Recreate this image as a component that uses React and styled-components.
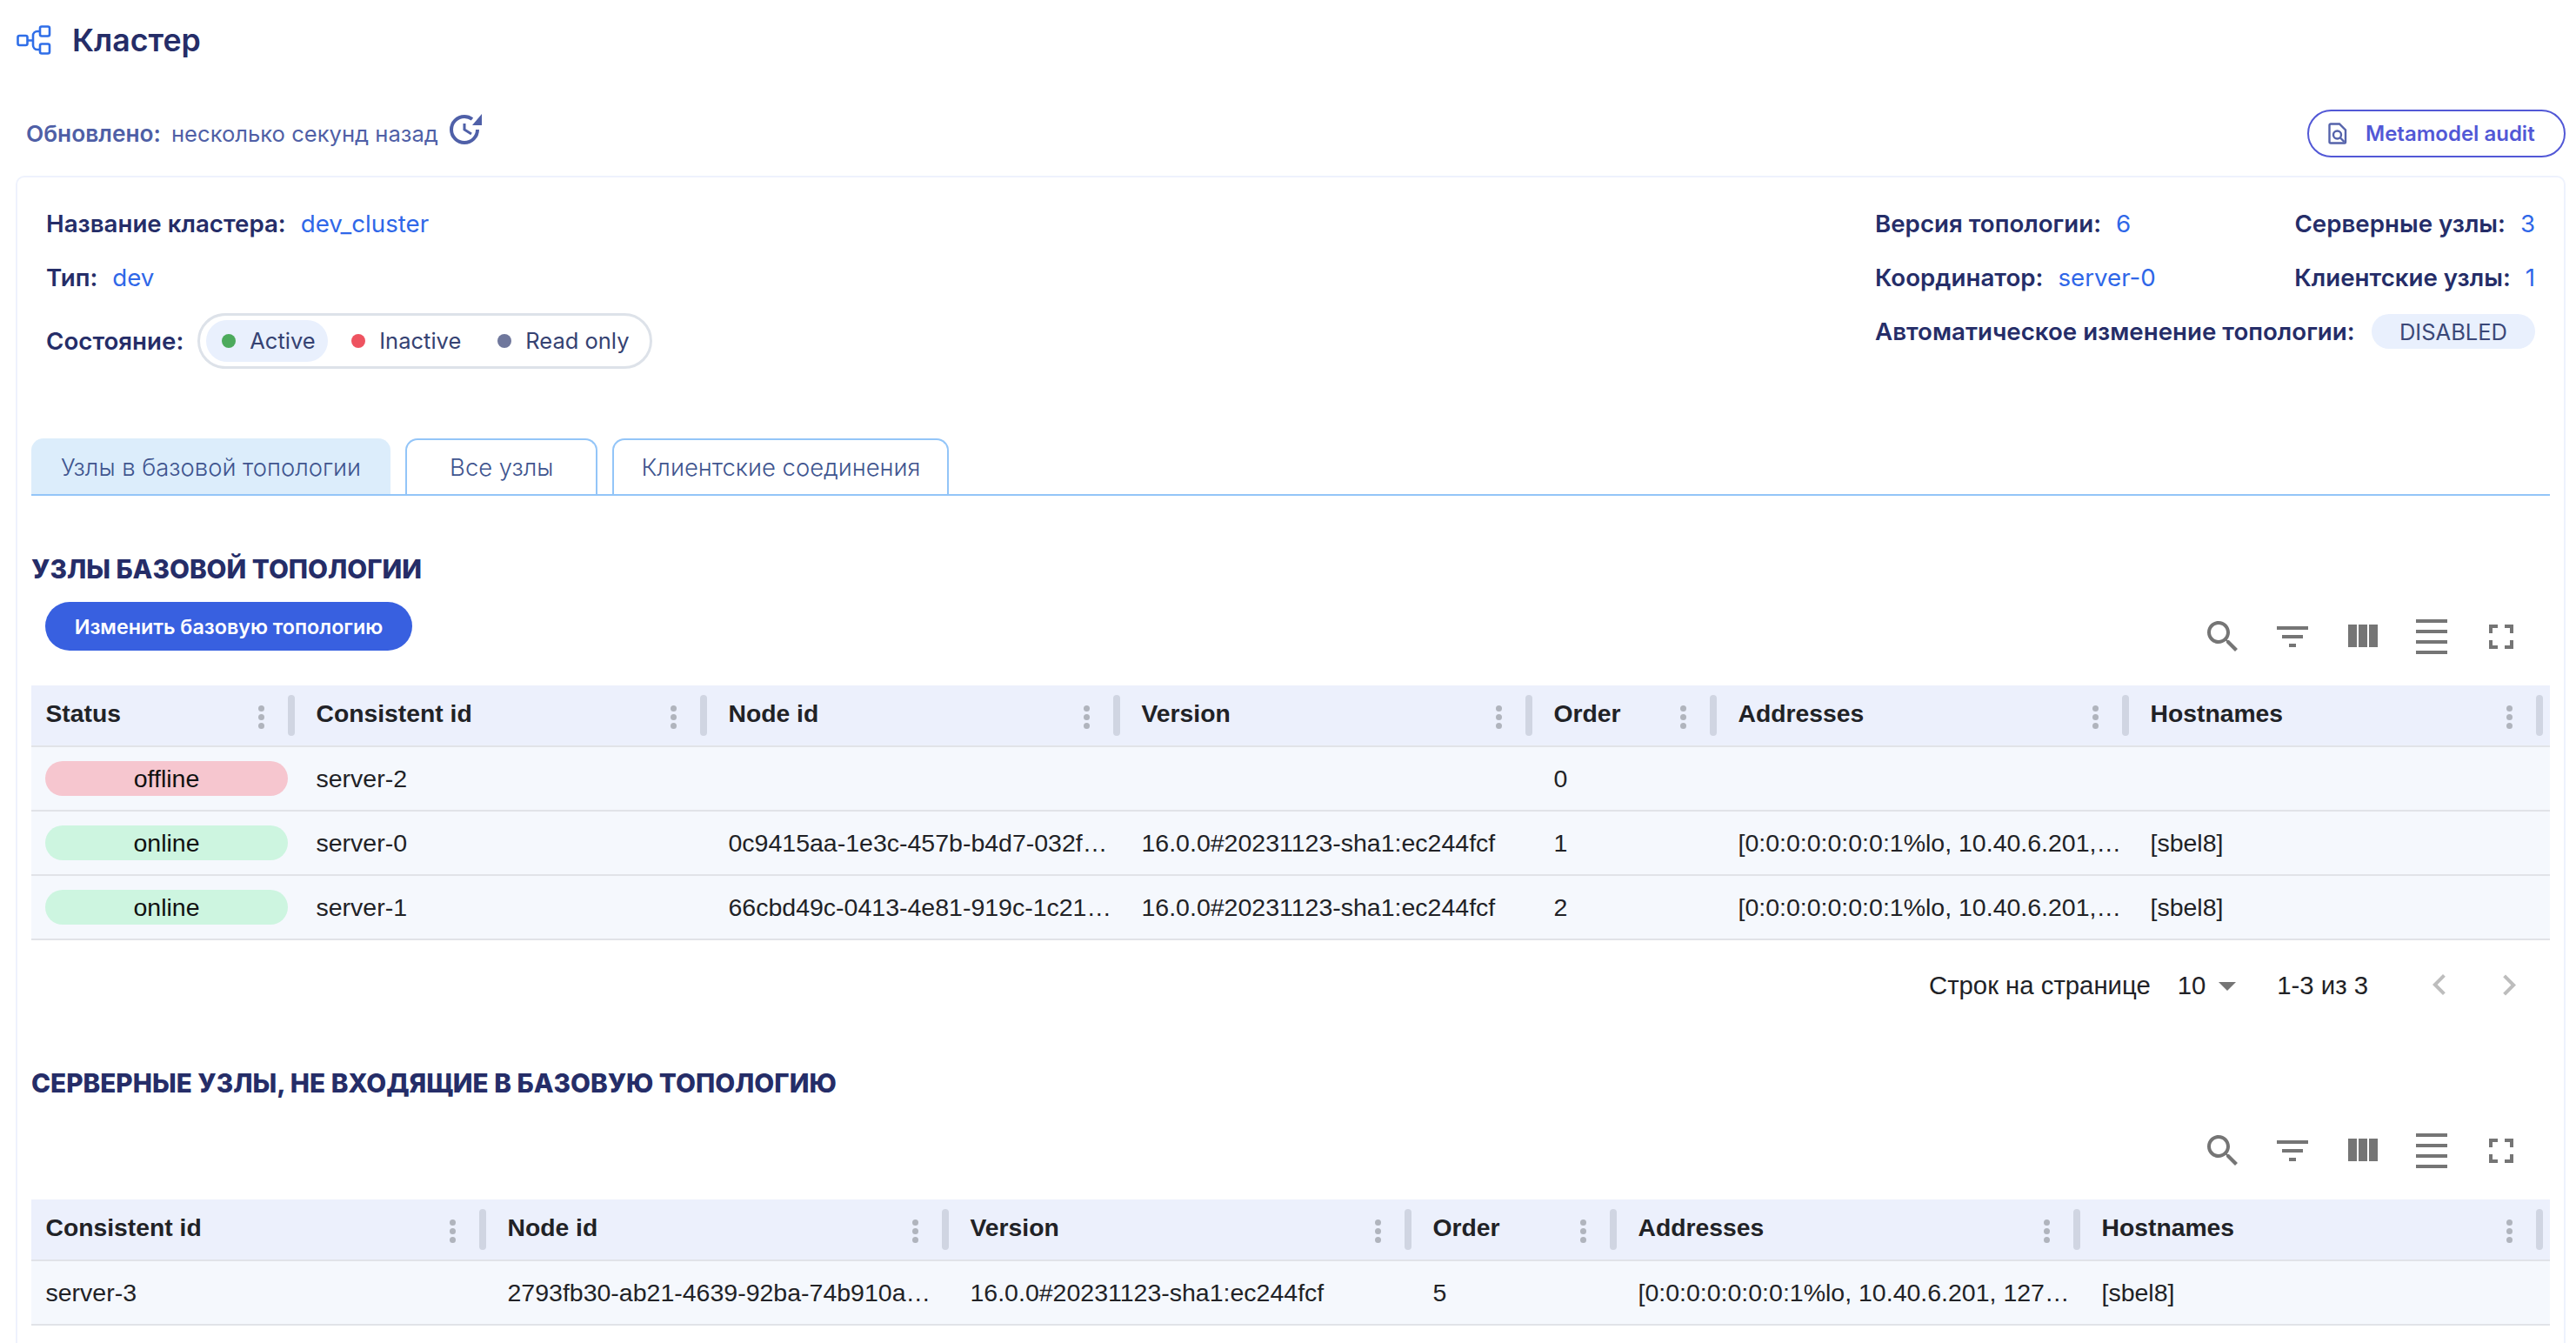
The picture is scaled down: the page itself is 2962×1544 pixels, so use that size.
import React from 'react';
import styled, { createGlobalStyle } from 'styled-components';

const navy = '#252d68';
const blue = '#2f67e8';
const ui = '"Inter", "Noto Sans", sans-serif';
const grid = '"Liberation Sans", Arial, sans-serif';

const Global = createGlobalStyle`
    html, body { margin: 0; padding: 0; background: #fff; }
    * { box-sizing: border-box; }
`;

const Page = styled.div`
    height: 100vh;
    overflow: hidden;
    display: flex;
    flex-direction: column;
    padding: 0 12px 0 18px;
    font-family: ${ui};
    color: ${navy};
`;

const Header = styled.header`
    height: 92px;
    margin-bottom: 34px;
    padding-left: 1px;
    display: flex;
    align-items: center;
    gap: 24px;
`;

const Title = styled.h1`
    margin: 0;
    font-size: 35.7px;
    font-weight: 600;
    color: ${navy};
`;

const UpdateBar = styled.div`
    height: 55px;
    margin-bottom: 21px;
    display: flex;
    align-items: center;
    justify-content: space-between;
    padding-left: 12px;
`;

const Updated = styled.div`
    display: flex;
    align-items: center;
    font-size: 25.6px;
    color: #4f5fa6;
    b { font-size: 26.3px; font-weight: 600; margin-right: 12px; }
    svg { margin-left: 13px; margin-top: -7px; }
`;

const AuditButton = styled.button`
    width: 297px;
    height: 55px;
    display: flex;
    align-items: center;
    gap: 21px;
    padding: 0 0 0 22px;
    background: #fff;
    border: 2px solid #5258d6;
    border-radius: 28px;
    font-family: ${ui};
    font-size: 24px;
    font-weight: 600;
    color: #5258d6;
`;

const Card = styled.main`
    flex: 1;
    border: 2px solid #eef2fd;
    border-bottom: none;
    border-radius: 10px 10px 0 0;
    padding: 0 16px;
`;

const Info = styled.section`
    display: flex;
    justify-content: space-between;
    padding: 22px 17px 0 17px;
    margin-bottom: 80px;
`;

const InfoColumn = styled.div`
    display: flex;
    flex-direction: column;
    width: ${p => p.$width || 'auto'};
`;

const InfoRow = styled.div`
    height: 62px;
    display: flex;
    align-items: center;
    justify-content: ${p => (p.$spread ? 'space-between' : 'flex-start')};
`;

const StateRow = styled.div`
    margin-top: 10px;
    display: flex;
    align-items: center;
    gap: 16px;
`;

const Pair = styled.div`
    display: flex;
    align-items: center;
    gap: 17px;
    font-size: 27.7px;
`;

const Label = styled.span`
    font-weight: 600;
    color: ${navy};
`;

const Value = styled.span`
    font-weight: 400;
    color: ${blue};
`;

const StateSwitch = styled.div`
    height: 64px;
    width: 523px;
    display: flex;
    align-items: center;
    gap: 9px;
    padding-left: 7px;
    border: 3px solid #dde2e9;
    border-radius: 32px;
`;

const StateOption = styled.div`
    height: 48px;
    width: ${p => p.$width}px;
    display: flex;
    align-items: center;
    gap: 16px;
    padding: 0 0 2px 18px;
    border-radius: 24px;
    background: ${p => (p.$active ? '#e9f0fd' : 'transparent')};
    font-size: 25.5px;
    color: #354272;
`;

const Dot = styled.i`
    width: 16px;
    height: 16px;
    flex: none;
    margin-top: 2px;
    border-radius: 50%;
    background: ${p => p.$color};
`;

const Badge = styled.span`
    width: 188px;
    height: 40px;
    display: flex;
    align-items: center;
    justify-content: center;
    border-radius: 20px;
    background: #e9f0fd;
    font-size: 25.5px;
    font-weight: 400;
    color: #3b4878;
`;

const Tabs = styled.nav`
    display: flex;
    gap: 17px;
    height: 66px;
    border-bottom: 2px solid #93c5f8;
`;

const Tab = styled.div`
    height: 64px;
    padding: 0 ${p => p.$pad}px;
    display: flex;
    align-items: center;
    font-size: 27.4px;
    font-weight: 300;
    color: #40558f;
    border-radius: 14px 14px 0 0;
    background: ${p => (p.$active ? '#dcedfb' : '#fff')};
    border: 2px solid ${p => (p.$active ? '#dcedfb' : '#93c5f8')};
    border-bottom: none;
`;

const SectionTitle = styled.h2`
    margin: ${p => p.$top}px 0 0;
    height: 40px;
    line-height: 40px;
    font-size: 29.7px;
    font-weight: 800;
    text-transform: uppercase;
    color: ${navy};
`;

const ToolRow = styled.div`
    display: flex;
    justify-content: space-between;
    align-items: flex-start;
    height: ${p => p.$height}px;
    margin-top: ${p => p.$top}px;
    padding: 0 16px;
`;

const PrimaryButton = styled.button`
    width: 422px;
    height: 56px;
    border: none;
    border-radius: 28px;
    background: #3860e0;
    color: #fff;
    font-family: ${ui};
    font-size: 23.3px;
    font-weight: 600;
`;

const Tools = styled.div`
    display: flex;
    margin-left: auto;
    margin-top: ${p => p.$shift || 0}px;
`;

const ToolButton = styled.div`
    width: 80px;
    height: 80px;
    display: flex;
    align-items: center;
    justify-content: center;
    svg { width: 48px; height: 48px; fill: #757575; }
`;

const Row = styled.div`
    display: grid;
    grid-template-columns: ${p => p.$cols};
    align-items: center;
    height: ${p => (p.$head ? 71 : 74)}px;
    background: ${p => (p.$head ? '#ecf0fc' : '#f5f8fd')};
    border-bottom: 2px solid #e1e3e8;
    font-family: ${grid};
    font-size: 28.5px;
    color: #212226;
`;

const HeadCell = styled.div`
    display: flex;
    align-items: center;
    padding: 0 8px 0 16.5px;
    font-size: 28.3px;
    font-weight: 700;
    span { flex: 1; margin-top: -4px; }
`;

const Kebab = styled.div`
    display: flex;
    flex-direction: column;
    gap: 3px;
    margin: 4px 27px 0 0;
    i { width: 7px; height: 7px; border-radius: 50%; background: #b0b4bd; }
`;

const Separator = styled.div`
    width: 8px;
    height: 47px;
    border-radius: 4px;
    background: #d0d5e2;
`;

const Cell = styled.div`
    padding: 1px 0 0 16.5px;
    white-space: nowrap;
    overflow: hidden;
`;

const StatusPill = styled.div`
    width: 279px;
    height: 40px;
    margin: -1px 0 0 -0.5px;
    display: flex;
    align-items: center;
    justify-content: center;
    border-radius: 20px;
    background: ${p => (p.$online ? '#cdf5e0' : '#f6c6cf')};
    color: #111;
    span { margin-top: 1px; }
`;

const Pagination = styled.div`
    height: 104px;
    display: flex;
    align-items: center;
    justify-content: flex-end;
    padding-right: 23px;
    font-family: ${grid};
    font-size: 29.3px;
    color: #212226;
`;

const PageSize = styled.div`
    display: flex;
    align-items: center;
    margin: 0 33px 0 31px;
    svg { width: 48px; height: 48px; fill: #757575; margin-left: 1px; }
`;

const PageArrow = styled.svg`
    width: 48px;
    height: 48px;
    fill: #bdbdbd;
    margin-left: ${p => p.$gap}px;
`;

const ClusterIcon = () => (
    <svg width="40" height="34" viewBox="0 0 40 34" fill="none" stroke="#2f6ee8" strokeWidth="2.6">
        <rect x="1.5" y="12" width="11" height="11" rx="2" />
        <rect x="27" y="1.5" width="11" height="11" rx="2" />
        <rect x="27" y="21.5" width="11" height="11" rx="2" />
        <path d="M12.5 17.5h6M27 7h-3a5 5 0 0 0-5 5v11a5 5 0 0 0 5 5h3" />
    </svg>
);

const RefreshIcon = () => (
    <svg width="38" height="38" viewBox="0 0 38 38" fill="none" stroke="#4f60a8" strokeWidth="4">
        <path d="M17 3A15 15 0 1 0 32 18M17 3c3 0 6 .8 9 3" />
        <path d="M17 11v7l8 5" strokeWidth="3" />
        <path d="M37 0v13H26z" fill="#4f60a8" stroke="none" />
    </svg>
);

const AuditIcon = () => (
    <svg width="22" height="25" viewBox="0 0 22 25" fill="none" stroke="#5563ab" strokeWidth="2.4">
        <path d="M3 1.500h10l7 7v14a1 1 0 0 1-1 1H3a1.500 1.500 0 0 1-1.500-1.500v-19A1.500 1.500 0 0 1 3 1.500z" />
        <circle cx="10.500" cy="14" r="4.500" />
        <path d="M14 17.500l4.500 4.500" />
    </svg>
);

const toolPaths = [
    'M15.5 14h-.79l-.28-.27C15.41 12.59 16 11.11 16 9.5 16 5.91 13.09 3 9.5 3S3 5.91 3 9.5 5.91 16 9.5 16c1.61 0 3.09-.59 4.23-1.57l.27.28v.79l5 4.99L20.49 19l-4.99-5zm-6 0C7.01 14 5 11.99 5 9.5S7.01 5 9.5 5 14 7.01 14 9.5 11.99 14 9.5 14z',
    'M10 18h4v-2h-4v2zM3 6v2h18V6H3zm3 7h12v-2H6v2z',
    'M10 18h5V5h-5v13zm-6 0h5V5H4v13zM16 5v13h5V5h-5z',
    'M3 2h18v2H3V2zm0 18h18v2H3v-2zm0-6h18v2H3v-2zm0-6h18v2H3V8z',
    'M7 14H5v5h5v-2H7v-3zm-2-4h2V7h3V5H5v5zm12 7h-3v2h5v-5h-2v3zM14 5v2h3v3h2V5h-5z',
];

const Toolbar = ({ shift }) => (
    <Tools $shift={shift}>
        {toolPaths.map(d => (
            <ToolButton key={d}>
                <svg viewBox="0 0 24 24"><path d={d} /></svg>
            </ToolButton>
        ))}
    </Tools>
);

const DataTable = ({ cols, heads, rows }) => (
    <div>
        <Row $head $cols={cols}>
            {heads.map(h => (
                <HeadCell key={h}>
                    <span>{h}</span>
                    <Kebab><i /><i /><i /></Kebab>
                    <Separator />
                </HeadCell>
            ))}
        </Row>
        {rows.map((row, i) => (
            <Row key={i} $cols={cols}>
                {row.map((c, j) => <Cell key={j}>{c}</Cell>)}
            </Row>
        ))}
    </div>
);

const version = '16.0.0#20231123-sha1:ec244fcf';
const addresses = '[0:0:0:0:0:0:0:1%lo, 10.40.6.201,…';

const baseRows = [
    [<StatusPill><span>offline</span></StatusPill>, 'server-2', '', '', '0', '', ''],
    [<StatusPill $online><span>online</span></StatusPill>, 'server-0', '0c9415aa-1e3c-457b-b4d7-032f…', version, '1', addresses, '[sbel8]'],
    [<StatusPill $online><span>online</span></StatusPill>, 'server-1', '66cbd49c-0413-4e81-919c-1c21…', version, '2', addresses, '[sbel8]'],
];

const otherRows = [
    ['server-3', '2793fb30-ab21-4639-92ba-74b910a…', version, '5', '[0:0:0:0:0:0:0:1%lo, 10.40.6.201, 127…', '[sbel8]'],
];

const App = () => (
    <Page>
        <Global />
        <Header>
            <ClusterIcon />
            <Title>Кластер</Title>
        </Header>
        <UpdateBar>
            <Updated>
                <b>Обновлено:</b> несколько секунд назад
                <RefreshIcon />
            </Updated>
            <AuditButton><AuditIcon />Metamodel audit</AuditButton>
        </UpdateBar>
        <Card>
            <Info>
                <InfoColumn>
                    <InfoRow><Pair><Label>Название кластера:</Label><Value>dev_cluster</Value></Pair></InfoRow>
                    <InfoRow><Pair><Label>Тип:</Label><Value>dev</Value></Pair></InfoRow>
                    <StateRow>
                        <Pair><Label>Состояние:</Label></Pair>
                        <StateSwitch>
                            <StateOption $active $width={140}><Dot $color="#4caa5c" />Active</StateOption>
                            <StateOption $width={159}><Dot $color="#ee5360" />Inactive</StateOption>
                            <StateOption $width={190}><Dot $color="#6f779c" />Read only</StateOption>
                        </StateSwitch>
                    </StateRow>
                </InfoColumn>
                <InfoColumn $width="759px">
                    <InfoRow $spread>
                        <Pair><Label>Версия топологии:</Label><Value>6</Value></Pair>
                        <Pair><Label>Серверные узлы:</Label><Value>3</Value></Pair>
                    </InfoRow>
                    <InfoRow $spread>
                        <Pair><Label>Координатор:</Label><Value>server-0</Value></Pair>
                        <Pair><Label>Клиентские узлы:</Label><Value>1</Value></Pair>
                    </InfoRow>
                    <InfoRow $spread>
                        <Pair><Label>Автоматическое изменение топологии:</Label></Pair>
                        <Badge>DISABLED</Badge>
                    </InfoRow>
                </InfoColumn>
            </Info>
            <Tabs>
                <Tab $active $pad={32}>Узлы в базовой топологии</Tab>
                <Tab $pad={49}>Все узлы</Tab>
                <Tab $pad={31}>Клиентские соединения</Tab>
            </Tabs>
            <SectionTitle $top={64}>Узлы базовой топологии</SectionTitle>
            <ToolRow $top={18} $height={96}>
                <PrimaryButton>Изменить базовую топологию</PrimaryButton>
                <Toolbar />
            </ToolRow>
            <DataTable
                cols="311px 474px 475px 474px 212px 474px 476px"
                heads={['Status', 'Consistent id', 'Node id', 'Version', 'Order', 'Addresses', 'Hostnames']}
                rows={baseRows}
            />
            <Pagination>
                Строк на странице
                <PageSize>
                    10
                    <svg viewBox="0 0 24 24"><path d="M7 10l5 5 5-5z" /></svg>
                </PageSize>
                1-3 из 3
                <PageArrow $gap={58} viewBox="0 0 24 24"><path d="M15.41 16.09l-4.58-4.59 4.58-4.59L14 5.5l-6 6 6 6z" /></PageArrow>
                <PageArrow $gap={32} viewBox="0 0 24 24"><path d="M8.59 16.34l4.58-4.59-4.58-4.59L10 5.75l6 6-6 6z" /></PageArrow>
            </Pagination>
            <SectionTitle $top={40}>Серверные узлы, не входящие в базовую топологию</SectionTitle>
            <ToolRow $top={17} $height={97}>
                <Toolbar shift={1} />
            </ToolRow>
            <DataTable
                cols="531px 532px 532px 236px 533px 532px"
                heads={['Consistent id', 'Node id', 'Version', 'Order', 'Addresses', 'Hostnames']}
                rows={otherRows}
            />
        </Card>
    </Page>
);

export default App;
